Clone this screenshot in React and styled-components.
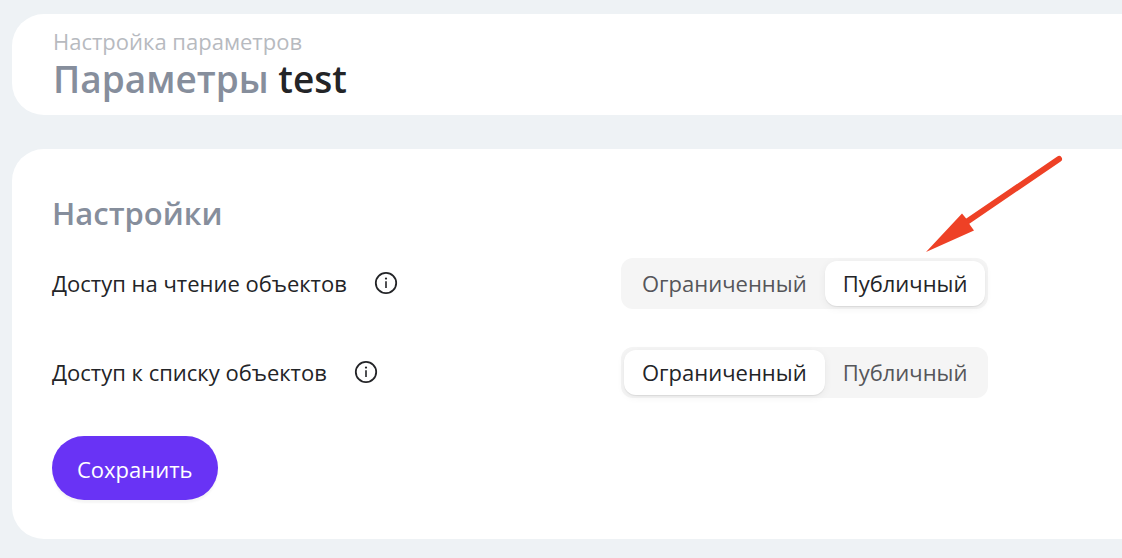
import React, { useState } from "react";
import styled, { createGlobalStyle } from "styled-components";

const GlobalStyle = createGlobalStyle`
  * {
    box-sizing: border-box;
  }

  body {
    margin: 0;
    background: #eef2f5;
    color: #232427;
    font-family: "Open Sans", "Noto Sans", sans-serif;
    font-size: 22px;
    line-height: 28px;
  }
`;

const Page = styled.main`
  display: flex;
  flex-direction: column;
  gap: 34px;
  padding: 14px 0 19px 12px;
`;

const Panel = styled.section`
  background: #ffffff;
  border-radius: 32px 0 0 32px;
  padding: ${(props) => props.$padding};
`;

const Subtitle = styled.p`
  margin: 0;
  color: #b7babf;
`;

const Title = styled.h1`
  margin: 0;
  color: #868e9c;
  font-size: 37px;
  font-weight: 600;
  line-height: 48px;
`;

const BucketName = styled.span`
  color: #232427;
`;

const Heading = styled.h2`
  margin: 0 0 23px;
  color: #868e9c;
  font-size: 31px;
  font-weight: 600;
  line-height: 44px;
`;

const Form = styled.form`
  display: flex;
  flex-direction: column;
  align-items: stretch;
`;

const Row = styled.div`
  display: grid;
  grid-template-columns: minmax(0, 569px) auto;
  justify-content: start;
  align-items: center;
  margin-bottom: 38px;
`;

const RowLabel = styled.div`
  display: flex;
  align-items: center;
  gap: 27px;
  padding-bottom: 2px;
`;

const InfoButton = styled.button`
  display: flex;
  padding: 0;
  border: 0;
  background: none;
  color: #232427;
  cursor: pointer;
`;

const Segmented = styled.div`
  position: relative;
  display: flex;
  padding: 3px;
  border-radius: 12px;
  background: #f5f5f5;
`;

const Segment = styled.label`
  padding: 8px 18px 9px;
  border-radius: 12px;
  color: #55565a;
  cursor: pointer;

  &:has(input:checked) {
    background: #ffffff;
    color: #232427;
    box-shadow: 0 1px 1px rgba(0, 0, 0, 0.08), 0 2px 8px rgba(0, 0, 0, 0.06);
  }
`;

const Radio = styled.input`
  position: absolute;
  opacity: 0;
  pointer-events: none;
`;

const Pointer = styled.svg`
  position: absolute;
  right: -75px;
  bottom: 56px;
  pointer-events: none;
`;

const SaveButton = styled.button`
  align-self: flex-start;
  padding: 19px 25px 17px;
  border: 0;
  border-radius: 32px;
  background: #6933f5;
  box-shadow: 0 3px 2px rgba(0, 0, 0, 0.04);
  color: #ffffff;
  font: inherit;
  cursor: pointer;
`;

const InfoIcon = () => (
  <svg width="24" height="24" viewBox="0 0 24 24" fill="none" aria-hidden="true">
    <circle cx="12" cy="12" r="10.2" stroke="currentColor" strokeWidth="1.8" />
    <path d="M12 10.3V17" stroke="currentColor" strokeWidth="1.6" />
    <circle cx="12" cy="7.6" r="1.1" fill="currentColor" />
  </svg>
);

const Arrow = () => (
  <Pointer width="138" height="100" viewBox="0 0 138 100" aria-hidden="true">
    <path
      d="M134 6L43 68"
      stroke="#ee4126"
      strokeWidth="6"
      strokeLinecap="round"
    />
    <path d="M1 99L37 60.500L42 66.500L45 72L49 77.500Z" fill="#ee4126" />
  </Pointer>
);

const options = [
  { value: "restricted", text: "Ограниченный" },
  { value: "public", text: "Публичный" },
];

const AccessRow = ({ name, text, value, onChange, children }) => (
  <Row>
    <RowLabel>
      <span id={`${name}-label`}>{text}</span>
      <InfoButton type="button" aria-label="Подробнее">
        <InfoIcon />
      </InfoButton>
    </RowLabel>
    <Segmented role="radiogroup" aria-labelledby={`${name}-label`}>
      {options.map((option) => (
        <Segment key={option.value}>
          <Radio
            type="radio"
            name={name}
            value={option.value}
            checked={value === option.value}
            onChange={onChange}
          />
          {option.text}
        </Segment>
      ))}
      {children}
    </Segmented>
  </Row>
);

export default () => {
  const [form, setForm] = useState({
    read: "public",
    list: "restricted",
  });
  const setAccess = (e) => {
    setForm({
      ...form,
      [e.target.name]: e.target.value,
    });
  };
  const handleSubmit = (e) => {
    e.preventDefault();
  };
  return (
    <>
      <GlobalStyle />
      <Page>
        <Panel $padding="13px 40px 12px 41px">
          <Subtitle>Настройка параметров</Subtitle>
          <Title>
            Параметры <BucketName>test</BucketName>
          </Title>
        </Panel>
        <Panel $padding="42px 40px 39px">
          <Heading>Настройки</Heading>
          <Form onSubmit={handleSubmit}>
            <AccessRow
              name="read"
              text="Доступ на чтение объектов"
              value={form.read}
              onChange={setAccess}
            >
              <Arrow />
            </AccessRow>
            <AccessRow
              name="list"
              text="Доступ к списку объектов"
              value={form.list}
              onChange={setAccess}
            />
            <SaveButton type="submit">Сохранить</SaveButton>
          </Form>
        </Panel>
      </Page>
    </>
  );
};
